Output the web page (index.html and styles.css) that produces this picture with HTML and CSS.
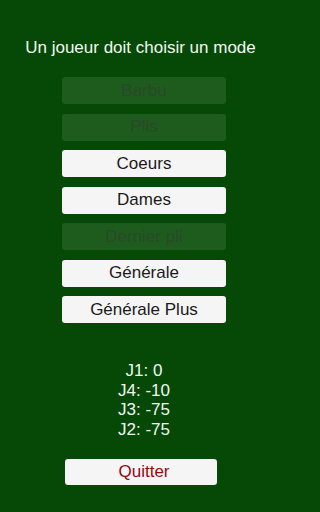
FILE: index.html
```html
<!DOCTYPE html>
<html>
<head>
<meta charset="utf-8">
<link rel="stylesheet" href="styles.css">
</head>
<body>
<div class="screen">
  <h1 class="title">Un joueur doit choisir un mode</h1>
  <div class="modes">
    <div class="btn disabled">Barbu</div>
    <div class="btn disabled">Plis</div>
    <div class="btn">Coeurs</div>
    <div class="btn">Dames</div>
    <div class="btn disabled">Dernier pli</div>
    <div class="btn">Générale</div>
    <div class="btn">Générale Plus</div>
  </div>
  <div class="scores">
    <div>J1: 0</div>
    <div>J4: -10</div>
    <div>J3: -75</div>
    <div>J2: -75</div>
  </div>
  <div class="quit"><span>Quitter</span></div>
</div>
</body>
</html>
```
FILE: styles.css
```css
html, body {
  margin: 0;
  padding: 0;
}
body {
  background: #064906;
  font-family: "Liberation Sans", Arial, sans-serif;
  width: 288px;
  height: 512px;
  overflow: hidden;
}
.screen {
  display: flex;
  flex-direction: column;
  align-items: center;
  padding-top: 38px;
}
.title {
  margin: 0 7px 0 0;
  font-size: 17px;
  font-weight: normal;
  line-height: 20px;
  color: #f2f7f2;
  height: 20px;
  white-space: nowrap;
}
.modes {
  display: flex;
  flex-direction: column;
  gap: 9.5px;
  margin-top: 19px;
}
.btn {
  width: 164px;
  height: 27px;
  border-radius: 3px;
  background: #f5f5f5;
  color: #1a1a1a;
  font-size: 17px;
  display: flex;
  align-items: center;
  justify-content: center;
}
.btn.disabled {
  background: #1d5c1d;
  color: #2b482b;
}
.scores {
  margin-top: 38px;
  font-size: 17px;
  line-height: 19.7px;
  color: #f2f7f2;
  text-align: center;
}
.quit {
  margin-top: 19px;
  margin-right: 6px;
  padding-left: 6px;
  box-sizing: border-box;
  width: 152px;
  height: 26px;
  border-radius: 3px;
  background: #f5f5f5;
  color: #8f0a14;
  font-size: 17px;
  display: flex;
  align-items: center;
  justify-content: center;
}
```
